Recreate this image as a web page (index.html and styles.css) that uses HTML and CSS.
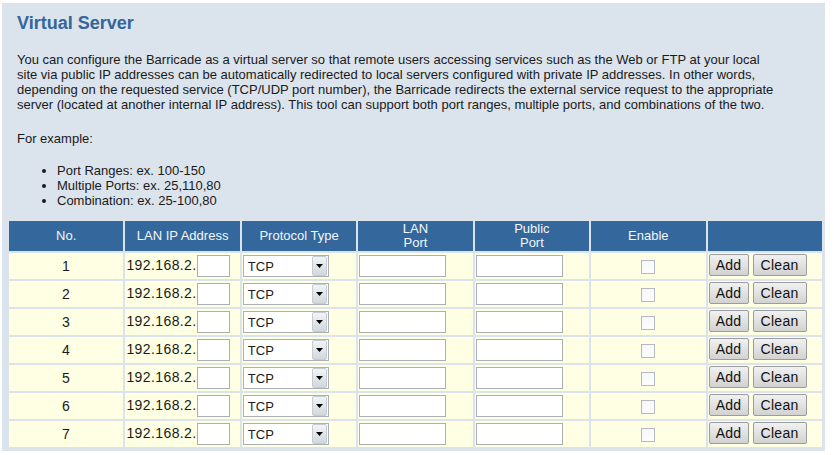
FILE: index.html
```html
<!DOCTYPE html>
<html lang="en">
<head>
    <meta charset="UTF-8">
    <title>Virtual Server</title>
    <link rel="stylesheet" href="styles.css">
</head>
<body>
    <div class="panel">
        <h1 class="title">Virtual Server</h1>
        <p class="intro">You can configure the Barricade as a virtual server so that remote users accessing services such as the Web or FTP at your local<br>
            site via public IP addresses can be automatically redirected to local servers configured with private IP addresses. In other words,<br>
            depending on the requested service (TCP/UDP port number), the Barricade redirects the external service request to the appropriate<br>
            server (located at another internal IP address). This tool can support both port ranges, multiple ports, and combinations of the two.</p>
        <p class="intro example-label">For example:</p>
        <ul class="examples">
            <li>Port Ranges: ex. 100-150</li>
            <li>Multiple Ports: ex. 25,110,80</li>
            <li>Combination: ex. 25-100,80</li>
        </ul>
        <table class="vs-table">
            <thead>
                <tr>
                    <th>No.</th>
                    <th>LAN IP Address</th>
                    <th>Protocol Type</th>
                    <th>LAN<br>Port</th>
                    <th>Public<br>Port</th>
                    <th>Enable</th>
                    <th></th>
                </tr>
            </thead>
            <tbody>
                <tr>
                    <td class="num">1</td>
                    <td class="ip">192.168.2.<input type="text" class="ip-last"></td>
                    <td><div class="select"><span class="val">TCP</span><span class="arrow"><svg width="7" height="4" viewBox="0 0 7 4"><path d="M0 0h7L3.5 4z" fill="#000"/></svg></span></div></td>
                    <td><input type="text" class="port"></td>
                    <td><input type="text" class="port"></td>
                    <td class="center"><span class="check"></span></td>
                    <td class="actions"><button>Add</button><button class="clean">Clean</button></td>
                </tr>
                <tr>
                    <td class="num">2</td>
                    <td class="ip">192.168.2.<input type="text" class="ip-last"></td>
                    <td><div class="select"><span class="val">TCP</span><span class="arrow"><svg width="7" height="4" viewBox="0 0 7 4"><path d="M0 0h7L3.5 4z" fill="#000"/></svg></span></div></td>
                    <td><input type="text" class="port"></td>
                    <td><input type="text" class="port"></td>
                    <td class="center"><span class="check"></span></td>
                    <td class="actions"><button>Add</button><button class="clean">Clean</button></td>
                </tr>
                <tr>
                    <td class="num">3</td>
                    <td class="ip">192.168.2.<input type="text" class="ip-last"></td>
                    <td><div class="select"><span class="val">TCP</span><span class="arrow"><svg width="7" height="4" viewBox="0 0 7 4"><path d="M0 0h7L3.5 4z" fill="#000"/></svg></span></div></td>
                    <td><input type="text" class="port"></td>
                    <td><input type="text" class="port"></td>
                    <td class="center"><span class="check"></span></td>
                    <td class="actions"><button>Add</button><button class="clean">Clean</button></td>
                </tr>
                <tr>
                    <td class="num">4</td>
                    <td class="ip">192.168.2.<input type="text" class="ip-last"></td>
                    <td><div class="select"><span class="val">TCP</span><span class="arrow"><svg width="7" height="4" viewBox="0 0 7 4"><path d="M0 0h7L3.5 4z" fill="#000"/></svg></span></div></td>
                    <td><input type="text" class="port"></td>
                    <td><input type="text" class="port"></td>
                    <td class="center"><span class="check"></span></td>
                    <td class="actions"><button>Add</button><button class="clean">Clean</button></td>
                </tr>
                <tr>
                    <td class="num">5</td>
                    <td class="ip">192.168.2.<input type="text" class="ip-last"></td>
                    <td><div class="select"><span class="val">TCP</span><span class="arrow"><svg width="7" height="4" viewBox="0 0 7 4"><path d="M0 0h7L3.5 4z" fill="#000"/></svg></span></div></td>
                    <td><input type="text" class="port"></td>
                    <td><input type="text" class="port"></td>
                    <td class="center"><span class="check"></span></td>
                    <td class="actions"><button>Add</button><button class="clean">Clean</button></td>
                </tr>
                <tr>
                    <td class="num">6</td>
                    <td class="ip">192.168.2.<input type="text" class="ip-last"></td>
                    <td><div class="select"><span class="val">TCP</span><span class="arrow"><svg width="7" height="4" viewBox="0 0 7 4"><path d="M0 0h7L3.5 4z" fill="#000"/></svg></span></div></td>
                    <td><input type="text" class="port"></td>
                    <td><input type="text" class="port"></td>
                    <td class="center"><span class="check"></span></td>
                    <td class="actions"><button>Add</button><button class="clean">Clean</button></td>
                </tr>
                <tr>
                    <td class="num">7</td>
                    <td class="ip">192.168.2.<input type="text" class="ip-last"></td>
                    <td><div class="select"><span class="val">TCP</span><span class="arrow"><svg width="7" height="4" viewBox="0 0 7 4"><path d="M0 0h7L3.5 4z" fill="#000"/></svg></span></div></td>
                    <td><input type="text" class="port"></td>
                    <td><input type="text" class="port"></td>
                    <td class="center"><span class="check"></span></td>
                    <td class="actions"><button>Add</button><button class="clean">Clean</button></td>
                </tr>
            </tbody>
        </table>
    </div>
</body>
</html>
```

FILE: styles.css
```css
body {
    margin: 0;
    background: #ffffff;
    font-family: "Liberation Sans", Arial, sans-serif;
    font-size: 13px;
    color: #1a1a1a;
}

.panel {
    width: 823px;
    margin: 3px 0 0 2px;
    padding: 9px 0 2px 5px;
    box-sizing: border-box;
    background: #dbe3ec;
}

.title {
    margin: 0 0 18px 10px;
    font-size: 18px;
    line-height: 22px;
    color: #336699;
}

.intro {
    margin: 0 0 19px 10px;
    line-height: 15px;
    white-space: nowrap;
}

.example-label {
    margin-bottom: 17px;
}

.examples {
    margin: 0 0 11px 10px;
    padding-left: 40px;
    line-height: 15px;
}

.vs-table {
    width: 817px;
    table-layout: fixed;
    border-collapse: separate;
    border-spacing: 2px;
    font-size: 14px;
}

.vs-table th {
    height: 30px;
    padding: 0;
    background: #34679b;
    color: #f4f6f8;
    font-size: 13px;
    font-weight: normal;
    line-height: 14px;
}

.vs-table td {
    height: 22px;
    padding: 2px 1px;
    background: #ffffe3;
    white-space: nowrap;
    letter-spacing: 0.4px;
}

.num,
.center {
    text-align: center;
}

.ip {
    padding-left: 1px;
}

input {
    height: 22px;
    margin: 0;
    padding: 0 3px;
    box-sizing: border-box;
    border: 1px solid #aab0b6;
    background: #fff;
    vertical-align: middle;
}

.ip-last {
    width: 33px;
}

.port {
    width: 87px;
}

.select {
    display: flex;
    align-items: center;
    justify-content: space-between;
    width: 86px;
    height: 22px;
    padding: 0 1px 0 4px;
    box-sizing: border-box;
    border: 1px solid #aab0b6;
    background: #fff;
    font-size: 13px;
    letter-spacing: 0;
}

.arrow {
    display: flex;
    align-items: center;
    justify-content: center;
    width: 13px;
    height: 18px;
    border: 1px solid #c5ccd3;
    border-radius: 2px;
    background: linear-gradient(#f2f4f6, #d3d8de);
}

.check {
    display: inline-block;
    width: 14px;
    height: 14px;
    box-sizing: border-box;
    border: 1px solid #b4b9bf;
    background: linear-gradient(135deg, #f6f6f6, #ffffff);
    vertical-align: middle;
}

.vs-table td.actions {
    vertical-align: top;
    padding: 1px 0 0 1px;
    letter-spacing: 0;
}

button {
    width: 40px;
    height: 22px;
    margin: 0;
    padding: 0;
    border: 1px solid #9c9c9c;
    border-radius: 2px;
    background: linear-gradient(#f1f1f1, #d2d2d2);
    font-family: "Liberation Sans", Arial, sans-serif;
    font-size: 14px;
    letter-spacing: 0.3px;
    color: #111;
}

button.clean {
    width: 54px;
    margin-left: 4px;
}
```
